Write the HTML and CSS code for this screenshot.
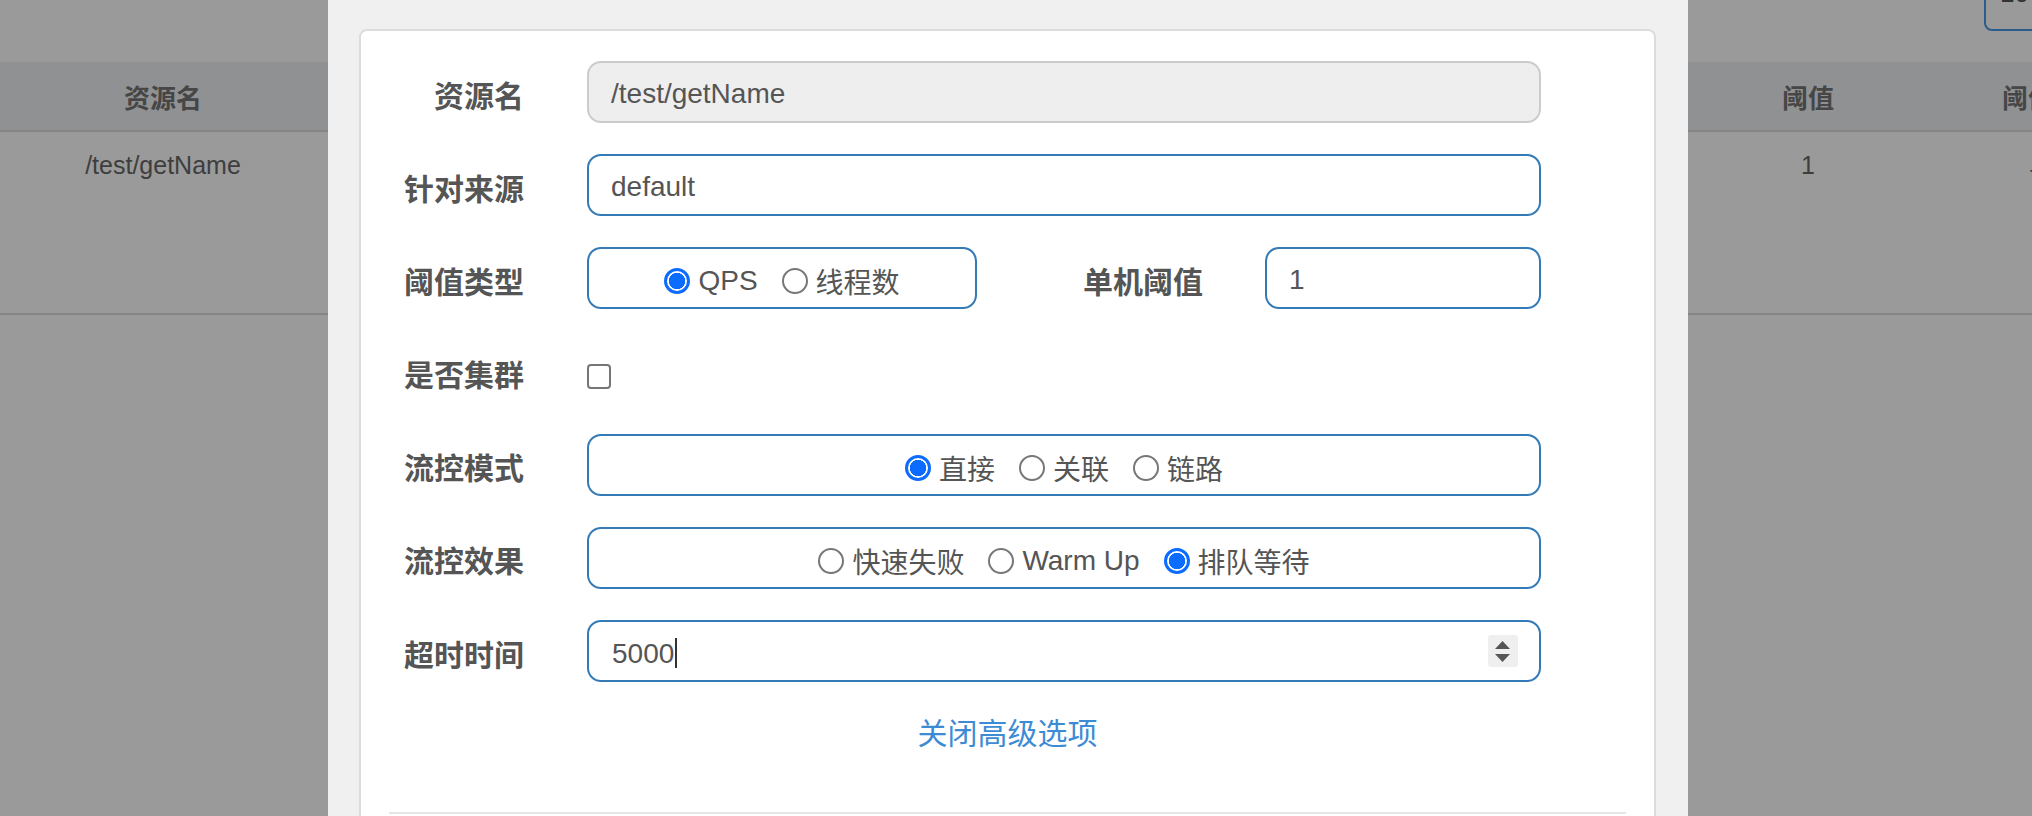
FILE: index.html
```html
<!DOCTYPE html>
<html lang="zh-CN">
<head>
<meta charset="utf-8">
<title>流控规则</title>
<link rel="stylesheet" href="styles.css">
</head>
<body>
<div class="page">
  <div class="toolbar"><div class="size-select">10</div></div>
  <table class="rules">
    <colgroup>
      <col class="c-res"><col class="c-mid"><col class="c-mid"><col class="c-mid"><col class="c-num"><col class="c-num"><col class="c-op">
    </colgroup>
    <thead>
      <tr><th>资源名</th><th>来源应用</th><th>流控模式</th><th>阈值类型</th><th>阈值</th><th>阈值模式</th><th>操作</th></tr>
    </thead>
    <tbody>
      <tr><td>/test/getName</td><td>default</td><td>直接</td><td>QPS</td><td>1</td><td>单机</td><td>编辑</td></tr>
    </tbody>
  </table>
</div>

<div class="modal">
  <div class="card">
    <form class="form">
      <div class="row">
        <label class="lbl">资源名</label>
        <input class="ctl ctl-disabled" type="text" value="/test/getName" disabled>
      </div>
      <div class="row">
        <label class="lbl">针对来源</label>
        <input class="ctl" type="text" value="default">
      </div>
      <div class="row">
        <label class="lbl">阈值类型</label>
        <div class="split">
          <div class="radio-box narrow">
            <label class="opt"><input class="rd" type="radio" name="grade" checked>QPS</label>
            <label class="opt"><input class="rd" type="radio" name="grade">线程数</label>
          </div>
          <label class="lbl lbl-inline">单机阈值</label>
          <input class="ctl ctl-short" type="text" value="1">
        </div>
      </div>
      <div class="row">
        <label class="lbl">是否集群</label>
        <input class="cb" type="checkbox">
      </div>
      <div class="row">
        <label class="lbl">流控模式</label>
        <div class="radio-box">
          <label class="opt"><input class="rd" type="radio" name="strategy" checked>直接</label>
          <label class="opt"><input class="rd" type="radio" name="strategy">关联</label>
          <label class="opt"><input class="rd" type="radio" name="strategy">链路</label>
        </div>
      </div>
      <div class="row">
        <label class="lbl">流控效果</label>
        <div class="radio-box">
          <label class="opt"><input class="rd" type="radio" name="behavior">快速失败</label>
          <label class="opt"><input class="rd" type="radio" name="behavior">Warm Up</label>
          <label class="opt"><input class="rd" type="radio" name="behavior" checked>排队等待</label>
        </div>
      </div>
      <div class="row">
        <label class="lbl">超时时间</label>
        <div class="ctl ctl-number">
          <span class="val">5000</span><span class="caret"></span>
          <span class="spin">
            <svg width="30" height="32" viewBox="0 0 30 32"><polygon points="14.5,6 22,14 7,14" fill="#555"/><polygon points="7,19 22,19 14.5,27" fill="#555"/></svg>
          </span>
        </div>
      </div>
    </form>
    <div class="toggle"><a class="link" href="#">关闭高级选项</a></div>
    <div class="divider"></div>
  </div>
</div>
</body>
</html>
```
FILE: styles.css
```css
* { box-sizing: border-box; }

html, body {
  margin: 0;
  width: 2032px;
  height: 816px;
  overflow: hidden;
}

body {
  position: relative;
  background: #9a9a9a;
  font-family: "Liberation Sans", "Noto Sans CJK SC", sans-serif;
  color: #555;
}

/* ---------- page underneath (dimmed) ---------- */
.page { width: 2032px; }

.toolbar {
  height: 62px;
  display: flex;
  justify-content: flex-end;
}

.size-select {
  width: 100px;
  height: 61px;
  margin-top: -30px;
  margin-right: -52px;
  border: 2px solid #2b5d8c;
  border-radius: 8px;
  padding: 8px 0 0 14px;
  font-size: 26px;
  line-height: 26px;
  color: #333;
}

.rules {
  border-collapse: collapse;
  table-layout: fixed;
  width: 2385px;
}

.c-res { width: 326px; }
.c-mid { width: 453px; }
.c-num { width: 246px; }
.c-op { width: 208px; }

.rules th {
  height: 69px;
  padding: 0;
  background: #909193;
  border-bottom: 2px solid #858585;
  font-size: 26px;
  font-weight: 700;
  color: #464646;
  text-align: center;
}

.rules td {
  height: 183px;
  padding: 18px 0 0;
  vertical-align: top;
  line-height: 30px;
  font-size: 25px;
  color: #3e3e3e;
  text-align: center;
  border-bottom: 2px solid #858585;
}

/* ---------- modal ---------- */
.modal {
  position: absolute;
  left: 328px;
  top: 0;
  width: 1360px;
  height: 816px;
  background: #f0f0f0;
  padding: 29px 32px 0 31px;
}

.card {
  height: 900px;
  background: #fff;
  border: 2px solid #dcdcdc;
  border-radius: 8px;
  padding-top: 30px;
}

.form {
  display: flex;
  flex-direction: column;
  gap: 31.2px;
  padding-right: 113px;
  margin: 0;
}

.row {
  display: flex;
  align-items: flex-start;
  height: 62px;
}

.lbl {
  flex: 0 0 163px;
  margin-right: 63px;
  height: 62px;
  padding-top: 3px;
  display: flex;
  align-items: center;
  justify-content: flex-end;
  font-size: 30px;
  font-weight: 700;
  color: #555;
  white-space: nowrap;
}

.ctl {
  flex: 1;
  min-width: 0;
  height: 62px;
  margin: 0;
  padding: 3px 22px 0;
  border: 2px solid #337ab7;
  border-radius: 14px;
  background: #fff;
  font-family: "Liberation Sans", "Noto Sans CJK SC", sans-serif;
  font-size: 28px;
  color: #555;
  outline: none;
}

.ctl-disabled {
  background: #eee;
  border-color: #ccc;
  -webkit-text-fill-color: #555;
  opacity: 1;
}

.split {
  flex: 1;
  display: flex;
}

.lbl-inline {
  flex: 1;
  margin-right: 62px;
}

.ctl-short { flex: 0 0 276px; }

.radio-box {
  flex: 1;
  height: 62px;
  padding-top: 6px;
  border: 2px solid #337ab7;
  border-radius: 14px;
  display: flex;
  align-items: center;
  justify-content: center;
}

.radio-box.narrow { flex: 0 0 390px; }

.opt {
  display: inline-flex;
  align-items: center;
  gap: 8px;
  font-size: 28px;
  color: #555;
  white-space: nowrap;
}

.opt + .opt { margin-left: 24px; }

.rd {
  -webkit-appearance: none;
  appearance: none;
  width: 26px;
  height: 26px;
  margin: 0;
  border: 2px solid #777;
  border-radius: 50%;
  background: #fff;
}

.rd:checked {
  border: 3px solid #0b6cff;
  background: radial-gradient(circle closest-side, #0b6cff 0 80%, #fff 84%);
}

.cb {
  -webkit-appearance: none;
  appearance: none;
  width: 24px;
  height: 25px;
  margin: 23px 0 0;
  border: 2.5px solid #767676;
  border-radius: 4px;
  background: #fff;
}

.ctl-number {
  display: flex;
  align-items: center;
  padding: 0 21px 0 23px;
}

.val {
  padding-top: 5px;
}

.caret {
  width: 2px;
  height: 30px;
  margin-left: 1px;
  margin-top: 3px;
  background: #333;
}

.spin {
  margin-left: auto;
  width: 30px;
  height: 32px;
  border-radius: 3px;
  background: #efefef;
  display: flex;
}

.toggle {
  margin-top: 30px;
  text-align: center;
  line-height: 44px;
}

.link {
  color: #3d8bd4;
  font-size: 30px;
  text-decoration: none;
}

.divider {
  margin: 51px 28px 0;
  border-top: 2px solid #e5e5e5;
}
```
